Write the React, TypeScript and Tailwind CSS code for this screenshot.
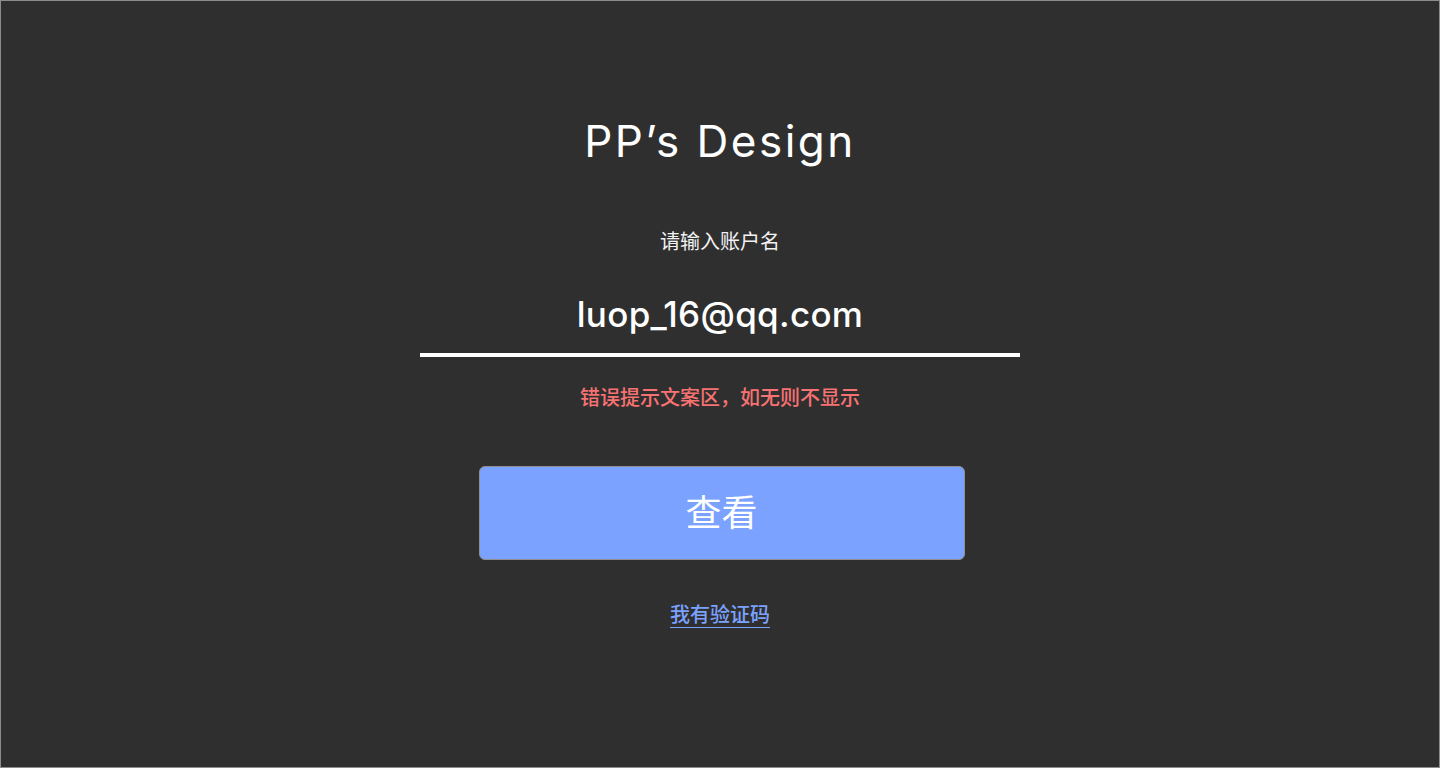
import React, { useState } from 'react';

const App: React.FC = () => {
    const [account] = useState('luop_16@qq.com');

    return (
        <div className="h-[768px] w-full bg-[#2f2f2f] border border-[#8c8c8c] font-['Inter','Noto_Sans_CJK_SC',sans-serif]">
            <div className="flex flex-col items-center pt-[114px]">
                <h1 className="text-[44px] leading-[52px] font-normal text-white tracking-[2.5px]">PP’s Design</h1>

                <label className="mt-[61px] text-[20px] leading-[28px] text-[#f2f2f2]">请输入账户名</label>

                <div className="mt-[37px] text-[35px] leading-[42px] font-medium text-white tracking-[0.3px]">{account}</div>
                <div className="mt-[18px] h-1 w-[600px] bg-white" />

                <p className="mt-[27px] text-[20px] leading-[28px] font-medium text-[#f77272]">错误提示文案区，如无则不显示</p>

                <button className="ml-[3px] mt-[54px] flex h-[94px] w-[486px] items-center justify-center rounded-md border border-[#8f8f8f] bg-[#7ba2fe] text-[36px] text-white">
                    查看
                </button>

                <a className="mt-[43px] border-b border-[#7ba2fe] text-[20px] leading-[24px] font-medium text-[#7ba2fe]">我有验证码</a>
            </div>
        </div>
    );
};

export default App;
